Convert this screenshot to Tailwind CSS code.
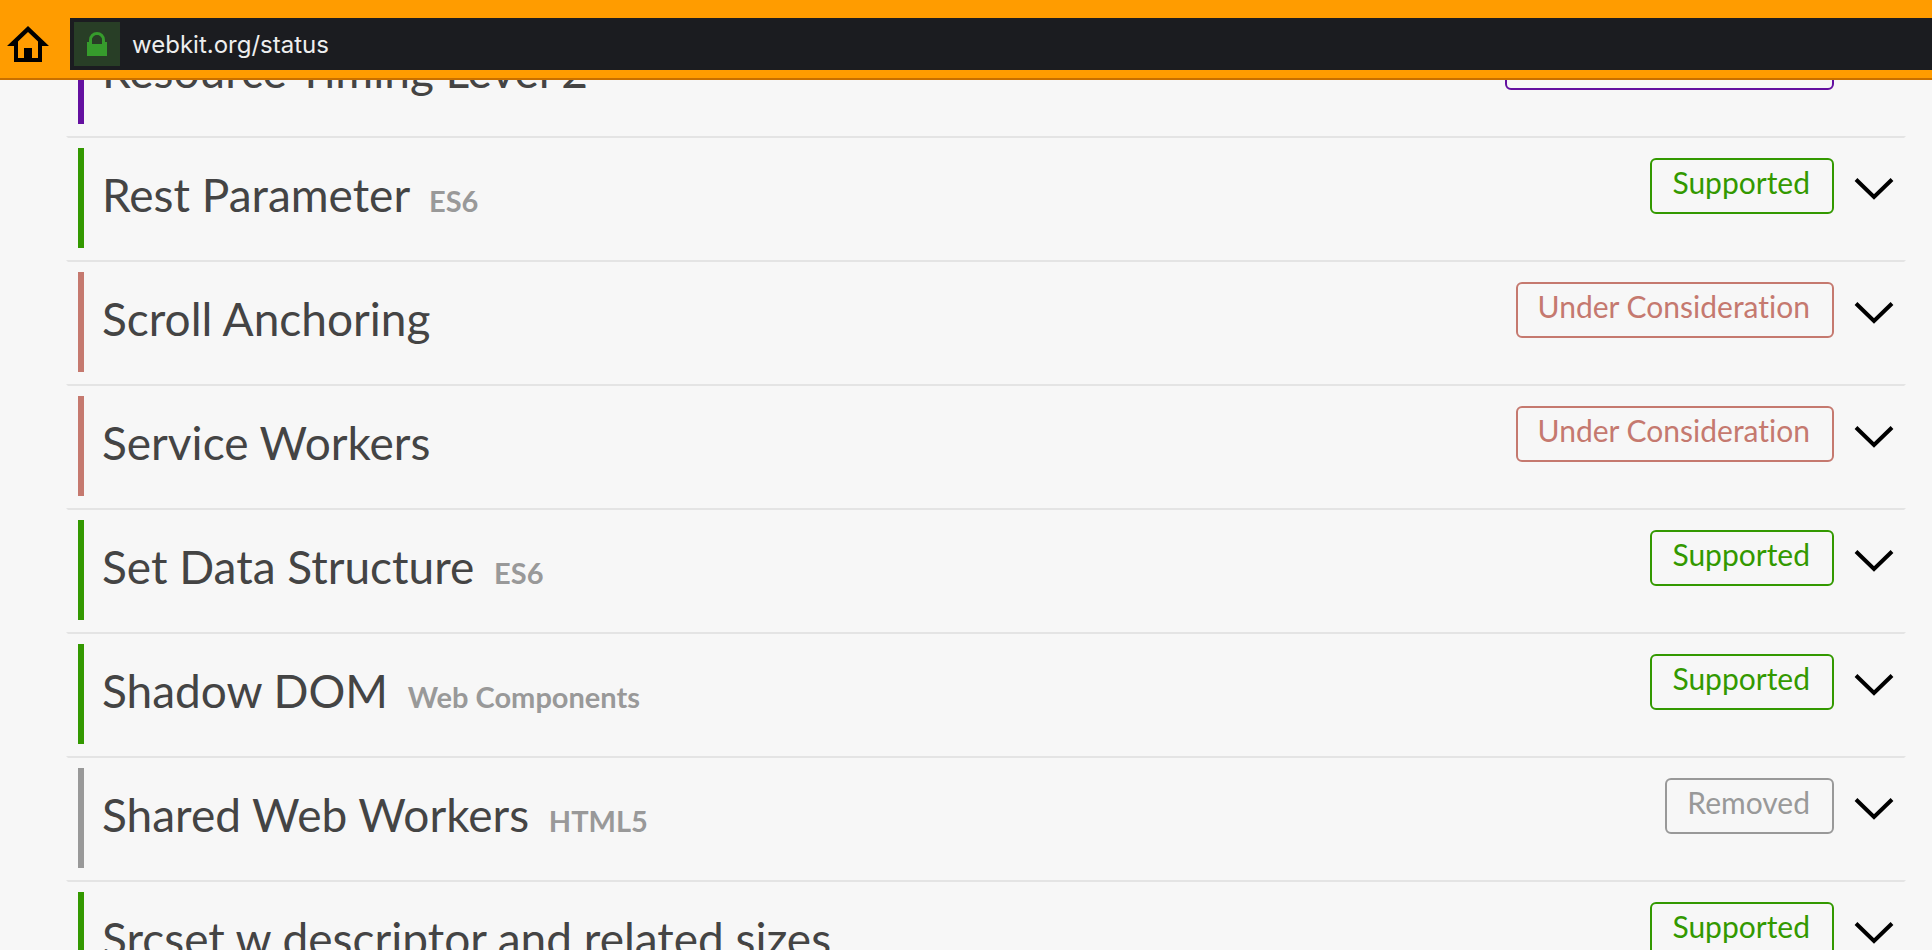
<!DOCTYPE html>
<html lang="en">

<head>
    <meta charset="UTF-8">
    <meta name="viewport" content="width=device-width, initial-scale=1.0">
    <title>WebKit Feature Status</title>
    <script src="https://cdn.jsdelivr.net/npm/@tailwindcss/browser@4"></script>
</head>
<body class="h-screen overflow-hidden bg-[#f7f7f7] font-['Lato',sans-serif] text-[#444444] [font-variant-ligatures:none]">

<!-- Address bar -->
<header class="fixed inset-x-0 top-0 z-10 flex h-20 items-start border-b-2 border-[#c87000] bg-[#ff9c00] pt-[18px]">
    <button type="button" aria-label="Home" class="flex h-[52px] w-[70px] shrink-0 items-center pl-[7px]">
        <svg class="h-[38px] w-[42px]" viewBox="0 0 42 38" fill="black">
            <path fill-rule="evenodd" d="M21 1L42 21H35V37H7V21H0ZM21 7L11 16.500V33H17V23H25V33H31V16.500Z"/>
        </svg>
    </button>
    <div class="flex h-[52px] flex-1 items-center bg-[#1b1c20] pl-1">
        <span class="flex h-11 w-[46px] items-center justify-center bg-[#283e26]">
            <svg class="h-6 w-5" viewBox="0 0 20 24">
                <path d="M3.500 13V8a6.500 6.500 0 0 1 13 0v5" fill="none" stroke="#369c2c" stroke-width="3"/>
                <path d="M0 10h20v14H0z" fill="#369c2c"/>
                <path d="M5 12V8.500a5 5 0 0 1 10 0V12z" fill="#283e26"/>
            </svg>
        </span>
        <label for="url" class="sr-only">Address</label>
        <input id="url" type="text" value="webkit.org/status" class="h-full min-w-0 flex-1 bg-transparent pl-3 font-['Inter',sans-serif] text-2xl text-[#eeeeee] outline-none">
    </div>
</header>

<!-- Feature list -->
<main class="pt-3 pr-[26px] pl-[66px]">
    <ul>
        <li class="border-2 border-transparent border-t-[#e4e4e4] px-2.5 pt-2.5 pb-2.5">
            <div class="flex h-[100px] items-start border-l-6 border-[#6410a0] pl-[18px]">
                <h3 class="text-[46px] leading-[94px]">Resource Timing Level 2</h3>
                <span class="mt-2.5 ml-auto rounded-md border-2 border-[#6410a0] pr-[22px] pb-2 pl-5 text-[30px] leading-[44px] text-[#6410a0]">Supported In Preview</span>
                <button type="button" aria-label="Show details" class="mt-[29px] ml-5 h-6 w-10">
                    <svg viewBox="0 0 40 24" fill="none" stroke="black" stroke-width="4"><path d="M2 2.500L20 20L38 2.500"/></svg>
                </button>
            </div>
        </li>
        <li class="border-2 border-transparent border-t-[#e4e4e4] px-2.5 pt-2.5 pb-2.5">
            <div class="flex h-[100px] items-start border-l-6 border-[#339900] pl-[18px]">
                <h3 class="text-[46px] leading-[94px]">Rest Parameter <a href="#" class="ml-2 text-[29px] font-bold text-[#999999]">ES6</a></h3>
                <span class="mt-2.5 ml-auto rounded-md border-2 border-[#339900] pr-[22px] pb-2 pl-5 text-[30px] leading-[44px] text-[#339900]">Supported</span>
                <button type="button" aria-label="Show details" class="mt-[29px] ml-5 h-6 w-10">
                    <svg viewBox="0 0 40 24" fill="none" stroke="black" stroke-width="4"><path d="M2 2.500L20 20L38 2.500"/></svg>
                </button>
            </div>
        </li>
        <li class="border-2 border-transparent border-t-[#e4e4e4] px-2.5 pt-2.5 pb-2.5">
            <div class="flex h-[100px] items-start border-l-6 border-[#c5796f] pl-[18px]">
                <h3 class="text-[46px] leading-[94px]">Scroll Anchoring</h3>
                <span class="mt-2.5 ml-auto rounded-md border-2 border-[#c5796f] pr-[22px] pb-2 pl-5 text-[30px] leading-[44px] text-[#c5796f]">Under Consideration</span>
                <button type="button" aria-label="Show details" class="mt-[29px] ml-5 h-6 w-10">
                    <svg viewBox="0 0 40 24" fill="none" stroke="black" stroke-width="4"><path d="M2 2.500L20 20L38 2.500"/></svg>
                </button>
            </div>
        </li>
        <li class="border-2 border-transparent border-t-[#e4e4e4] px-2.5 pt-2.5 pb-2.5">
            <div class="flex h-[100px] items-start border-l-6 border-[#c5796f] pl-[18px]">
                <h3 class="text-[46px] leading-[94px]">Service Workers</h3>
                <span class="mt-2.5 ml-auto rounded-md border-2 border-[#c5796f] pr-[22px] pb-2 pl-5 text-[30px] leading-[44px] text-[#c5796f]">Under Consideration</span>
                <button type="button" aria-label="Show details" class="mt-[29px] ml-5 h-6 w-10">
                    <svg viewBox="0 0 40 24" fill="none" stroke="black" stroke-width="4"><path d="M2 2.500L20 20L38 2.500"/></svg>
                </button>
            </div>
        </li>
        <li class="border-2 border-transparent border-t-[#e4e4e4] px-2.5 pt-2.5 pb-2.5">
            <div class="flex h-[100px] items-start border-l-6 border-[#339900] pl-[18px]">
                <h3 class="text-[46px] leading-[94px]">Set Data Structure <a href="#" class="ml-2 text-[29px] font-bold text-[#999999]">ES6</a></h3>
                <span class="mt-2.5 ml-auto rounded-md border-2 border-[#339900] pr-[22px] pb-2 pl-5 text-[30px] leading-[44px] text-[#339900]">Supported</span>
                <button type="button" aria-label="Show details" class="mt-[29px] ml-5 h-6 w-10">
                    <svg viewBox="0 0 40 24" fill="none" stroke="black" stroke-width="4"><path d="M2 2.500L20 20L38 2.500"/></svg>
                </button>
            </div>
        </li>
        <li class="border-2 border-transparent border-t-[#e4e4e4] px-2.5 pt-2.5 pb-2.5">
            <div class="flex h-[100px] items-start border-l-6 border-[#339900] pl-[18px]">
                <h3 class="text-[46px] leading-[94px]">Shadow DOM <a href="#" class="ml-2 text-[29px] font-bold text-[#999999]">Web Components</a></h3>
                <span class="mt-2.5 ml-auto rounded-md border-2 border-[#339900] pr-[22px] pb-2 pl-5 text-[30px] leading-[44px] text-[#339900]">Supported</span>
                <button type="button" aria-label="Show details" class="mt-[29px] ml-5 h-6 w-10">
                    <svg viewBox="0 0 40 24" fill="none" stroke="black" stroke-width="4"><path d="M2 2.500L20 20L38 2.500"/></svg>
                </button>
            </div>
        </li>
        <li class="border-2 border-transparent border-t-[#e4e4e4] px-2.5 pt-2.5 pb-2.5">
            <div class="flex h-[100px] items-start border-l-6 border-[#999999] pl-[18px]">
                <h3 class="text-[46px] leading-[94px]">Shared Web Workers <a href="#" class="ml-2 text-[29px] font-bold text-[#999999]">HTML5</a></h3>
                <span class="mt-2.5 ml-auto rounded-md border-2 border-[#999999] pr-[22px] pb-2 pl-5 text-[30px] leading-[44px] text-[#999999]">Removed</span>
                <button type="button" aria-label="Show details" class="mt-[29px] ml-5 h-6 w-10">
                    <svg viewBox="0 0 40 24" fill="none" stroke="black" stroke-width="4"><path d="M2 2.500L20 20L38 2.500"/></svg>
                </button>
            </div>
        </li>
        <li class="border-2 border-transparent border-t-[#e4e4e4] px-2.5 pt-2.5 pb-2.5">
            <div class="flex h-[100px] items-start border-l-6 border-[#339900] pl-[18px]">
                <h3 class="text-[46px] leading-[94px]">Srcset w descriptor and related sizes</h3>
                <span class="mt-2.5 ml-auto rounded-md border-2 border-[#339900] pr-[22px] pb-2 pl-5 text-[30px] leading-[44px] text-[#339900]">Supported</span>
                <button type="button" aria-label="Show details" class="mt-[29px] ml-5 h-6 w-10">
                    <svg viewBox="0 0 40 24" fill="none" stroke="black" stroke-width="4"><path d="M2 2.500L20 20L38 2.500"/></svg>
                </button>
            </div>
        </li>
    </ul>
</main>

</body>
</html>
